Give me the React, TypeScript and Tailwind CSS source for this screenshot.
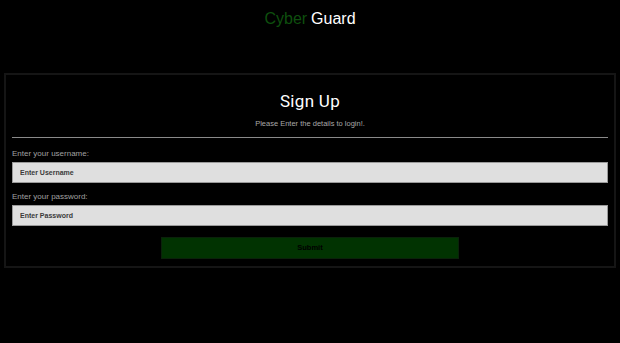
export default function App() {
  return (
    <div className="min-h-[343px] bg-black font-['Liberation_Sans',Arial,sans-serif]">
      {/* Header */}
      <div className="h-[37px] flex items-center justify-center text-[16px] leading-none">
        <span className="text-[#0e4f0e]">Cyber</span>
        <span className="text-white ml-[4px]">Guard</span>
      </div>

      {/* Card */}
      <div className="mx-[4px] mt-[36px] border-2 border-[#151515] px-[6px] pt-[16px] pb-[7px]">
        <h1 className="text-center text-white text-[17px] leading-[20px] font-['Roboto',sans-serif] tracking-[0.3px]">
          Sign Up
        </h1>
        <p className="mt-[8px] text-center text-[#a8a8a8] text-[7.5px] leading-[10px]">
          Please Enter the details to login!.
        </p>
        <hr className="mt-[8px] border-0 border-t border-[#8a8a8a]" />

        <label className="block mt-[11px] text-[#a0a0a0] text-[8px] leading-[10px]">
          Enter your username:
        </label>
        <input
          type="text"
          placeholder="Enter Username"
          className="mt-[3px] block w-full h-[21px] bg-[#dfdfdf] border border-[#9a9a9a] px-[7px] text-[7px] font-bold placeholder:text-[#3a3a3a] outline-none"
        />

        <label className="block mt-[9px] text-[#a0a0a0] text-[8px] leading-[10px]">
          Enter your password:
        </label>
        <input
          type="password"
          placeholder="Enter Password"
          className="mt-[3px] block w-full h-[21px] bg-[#dfdfdf] border border-[#9a9a9a] px-[7px] text-[7px] font-bold placeholder:text-[#3a3a3a] outline-none"
        />

        <div className="flex justify-center mt-[11px]">
          <button className="w-1/2 h-[22px] bg-[#013301] border border-[#0a220a] text-black text-[7.5px] font-bold">
            Submit
          </button>
        </div>
      </div>
    </div>
  )
}
